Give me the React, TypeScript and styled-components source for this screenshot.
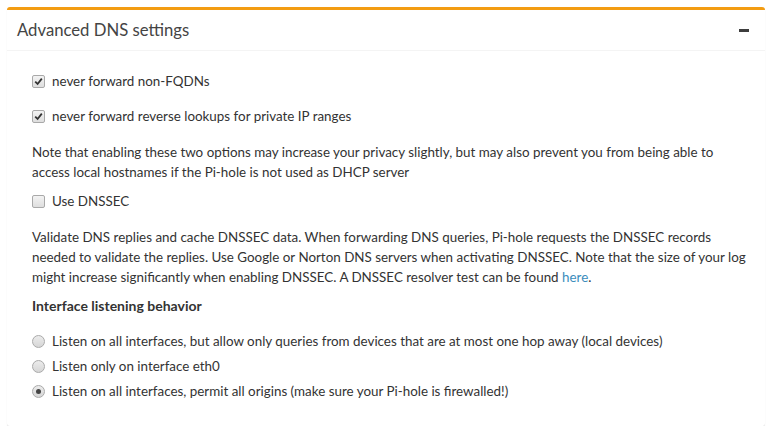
import React from "react";
import styled, { createGlobalStyle } from "styled-components";

const GlobalStyle = createGlobalStyle`
  html, body { margin: 0; padding: 0; background: #ffffff; }
  body {
    font-family: "Source Sans Pro", Lato, "Liberation Sans", sans-serif;
    font-size: 13.4px;
    line-height: 20px;
    color: #333333;
  }
  * { box-sizing: border-box; }
`;

const Page = styled.div`
  padding: 7px 10px 0 7px;
`;

const Box = styled.section`
  background: #ffffff;
  border-top: 3px solid #f39c12;
  border-radius: 3px;
  box-shadow: 0 1px 1px rgba(0, 0, 0, 0.12);
`;

const Header = styled.header`
  display: flex;
  align-items: center;
  justify-content: space-between;
  height: 41px;
  padding: 0 16px 0 10px;
  border-bottom: 1px solid #f4f4f4;
`;

const Title = styled.h3`
  margin: 0;
  font-size: 16.7px;
  font-weight: 400;
  line-height: 1;
  color: #444444;
`;

const ToolButton = styled.button`
  display: flex;
  align-items: center;
  justify-content: center;
  border: 0;
  background: transparent;
  padding: 0;
  width: 10px;
  height: 20px;
  cursor: pointer;
`;

const Body = styled.div`
  padding: 20px 16px 25px 25px;
  display: flex;
  flex-direction: column;
`;

const OptionRow = styled.label<{ $mt?: number }>`
  display: flex;
  align-items: center;
  gap: 7px;
  height: 20px;
  margin-top: ${(p) => p.$mt ?? 0}px;
  cursor: pointer;
`;

const CheckMark = styled.span`
  width: 13px;
  height: 13px;
  flex: none;
  border: 1px solid #a9a9a9;
  border-radius: 2px;
  background: linear-gradient(#f3f3f3, #dedede);
  display: flex;
  align-items: center;
  justify-content: center;
`;

const RadioMark = styled.span<{ $checked?: boolean }>`
  width: 13px;
  height: 13px;
  flex: none;
  border: 1px solid #aaaaaa;
  border-radius: 50%;
  background: linear-gradient(#ececec, #d6d6d6);
  display: flex;
  align-items: center;
  justify-content: center;
  &::after {
    content: "";
    display: ${(p) => (p.$checked ? "block" : "none")};
    width: 5px;
    height: 5px;
    border-radius: 50%;
    background: #444444;
  }
`;

const Paragraph = styled.p<{ $mt: number }>`
  margin: ${(p) => p.$mt}px 0 0 0;
`;

const Link = styled.a`
  color: #3c8dbc;
  text-decoration: none;
`;

const SubHeading = styled.div`
  margin-top: 9px;
  font-size: 14px;
  font-weight: 700;
`;

const Check = ({ checked }: { checked?: boolean }) => (
  <CheckMark>
    {checked && (
      <svg width="9" height="9" viewBox="0 0 9 9">
        <path d="M1.2 4.6 L3.6 7 L7.8 1.6" fill="none" stroke="#333" strokeWidth="1.8" />
      </svg>
    )}
  </CheckMark>
);

export default function App() {
  return (
    <Page>
      <GlobalStyle />
      <Box>
        <Header>
          <Title>Advanced DNS settings</Title>
          <ToolButton aria-label="collapse">
            <svg width="10" height="3" viewBox="0 0 10 3">
              <rect width="10" height="3" fill="#3d3d3d" />
            </svg>
          </ToolButton>
        </Header>
        <Body>
          <OptionRow>
            <Check checked />
            never forward non-FQDNs
          </OptionRow>
          <OptionRow $mt={15}>
            <Check checked />
            never forward reverse lookups for private IP ranges
          </OptionRow>
          <Paragraph $mt={16}>
            Note that enabling these two options may increase your privacy slightly, but may also prevent you from being able to access local hostnames if the Pi-hole is not used as DHCP server
          </Paragraph>
          <OptionRow $mt={9}>
            <Check />
            Use DNSSEC
          </OptionRow>
          <Paragraph $mt={16}>
            Validate DNS replies and cache DNSSEC data. When forwarding DNS queries, Pi-hole requests the DNSSEC records needed to validate the replies. Use Google or Norton DNS servers when activating DNSSEC. Note that the size of your log might increase significantly when enabling DNSSEC. A DNSSEC resolver test can be found <Link href="#">here</Link>.
          </Paragraph>
          <SubHeading>Interface listening behavior</SubHeading>
          <OptionRow $mt={15}>
            <RadioMark />
            Listen on all interfaces, but allow only queries from devices that are at most one hop away (local devices)
          </OptionRow>
          <OptionRow $mt={5}>
            <RadioMark />
            Listen only on interface eth0
          </OptionRow>
          <OptionRow $mt={5}>
            <RadioMark $checked />
            Listen on all interfaces, permit all origins (make sure your Pi-hole is firewalled!)
          </OptionRow>
        </Body>
      </Box>
    </Page>
  );
}
